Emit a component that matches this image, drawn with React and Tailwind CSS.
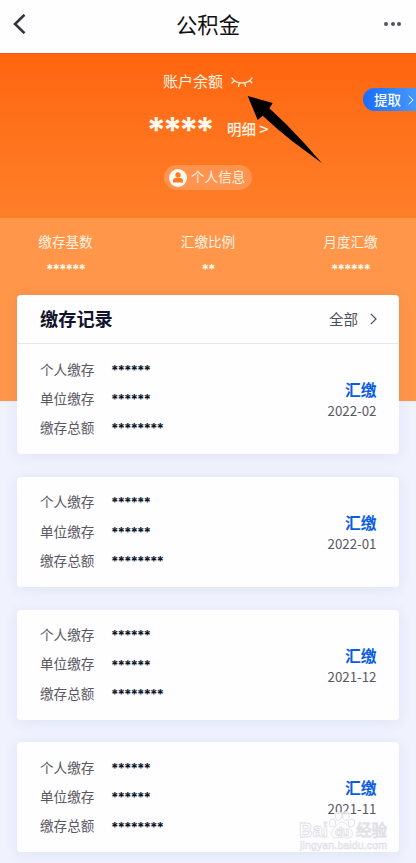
import React from 'react';

const stats = [
  { label: '缴存基数', value: '******' },
  { label: '汇缴比例', value: '**' },
  { label: '月度汇缴', value: '******' },
];

const records = [
  { date: '2022-02', personal: '******', company: '******', total: '********' },
  { date: '2022-01', personal: '******', company: '******', total: '********' },
  { date: '2021-12', personal: '******', company: '******', total: '********' },
  { date: '2021-11', personal: '******', company: '******', total: '********' },
];

const ClosedEye = () => (
  <svg width="22" height="12" viewBox="0 0 22 12" fill="none" stroke="#ffecd8" strokeWidth="1.4" strokeLinecap="round">
    <path d="M1 2C5 8.600 17 8.600 21 2" />
    <path d="M3.500 4.600L1 7M8.300 6.800L7.500 10.300M13.700 6.800l.8 3.500M18.500 4.600L21 7" />
  </svg>
);

const Chevron = ({ className }) => (
  <svg className={className} viewBox="0 0 7 12" fill="none" stroke="currentColor" strokeWidth="1.2">
    <path d="M0.8 0.8L6 6L0.8 11.2" />
  </svg>
);

const RecordRow = ({ label, value }) => (
  <div className="flex h-[29.3px] items-center">
    <span className="w-[71px] text-[13.6px] text-[#58585e]">{label}</span>
    <span className="h-[18px] font-['Inter'] text-[13.5px] font-bold leading-[20px] tracking-[-1.05px] text-[#0b1626]">{value}</span>
  </div>
);

const RecordBody = ({ record }) => (
  <div className="flex h-[110px] items-center justify-between pl-[23px] pr-[22.5px]">
    <div className="pb-[2px]">
      <RecordRow label="个人缴存" value={record.personal} />
      <RecordRow label="单位缴存" value={record.company} />
      <RecordRow label="缴存总额" value={record.total} />
    </div>
    <div className="flex flex-col items-end pt-[2px]">
      <span className="text-[15.8px] font-bold leading-[22px] text-[#0a5ce0]">汇缴</span>
      <span className="text-[13.3px] leading-[20px] text-[#58585e]">{record.date}</span>
    </div>
  </div>
);

const Watermark = () => (
  <svg
    className="absolute left-[296px] top-[806px]"
    width="96"
    height="48"
    viewBox="0 0 96 48"
    fill="#ffffff"
    fillOpacity="0.8"
    stroke="#dfdfe4"
    strokeWidth="0.9"
    fontFamily="'Liberation Sans', 'Noto Sans CJK SC', sans-serif"
  >
    <text x="3" y="31" fontSize="21" fontWeight="bold" textLength="29" lengthAdjust="spacingAndGlyphs">Bai</text>
    <ellipse cx="36.5" cy="17" rx="3.2" ry="4" />
    <ellipse cx="42.5" cy="10" rx="3.2" ry="4.3" />
    <ellipse cx="50" cy="10" rx="3.2" ry="4.3" />
    <ellipse cx="55.5" cy="17" rx="3.2" ry="4" />
    <path d="M46 16c-4 0-5.5 4-8 6.2-3.2 2.8-3.5 9.8 2 9.8 3 0 4-.7 6-.7s3 .7 6 .7c5.5 0 5.2-7 2-9.8C51.5 20 50 16 46 16z" />
    <text x="39" y="30" fontSize="12" fontWeight="bold" textLength="14">du</text>
    <text x="60" y="30" fontSize="15.5" textLength="31">经验</text>
    <text x="4" y="43" fontSize="10.5" strokeWidth="0.6" textLength="87">jingyan.baidu.com</text>
  </svg>
);

const App = () => {
  return (
    <div className="relative h-[863px] w-[416px] overflow-hidden bg-[#f0f3fe] font-['Noto_Sans_CJK_SC',sans-serif]">
      {/* Nav bar */}
      <header className="grid h-[53px] grid-cols-3 items-center bg-[#fefdff] pb-[6px]">
        <svg className="ml-[13px]" width="13" height="20" viewBox="0 0 13 20" fill="none" stroke="#343438" strokeWidth="2.6">
          <path d="M11.5 0.8L2 10L11.5 19.2" />
        </svg>
        <h1 className="text-center text-[21.3px] leading-[30px] text-[#111]">公积金</h1>
        <div className="mr-[15px] flex gap-[2.5px] justify-self-end">
          <i className="size-[4px] rounded-full bg-[#55555a]" />
          <i className="size-[4px] rounded-full bg-[#55555a]" />
          <i className="size-[4px] rounded-full bg-[#55555a]" />
        </div>
      </header>

      {/* Balance */}
      <section className="h-[165px] border-t border-[#e85f20] bg-linear-to-b from-[#ff650d] to-[#ff7f28] text-[#fff3e4]">
        <div className="flex h-[54px] items-center pl-[163px]">
          <span className="text-[15px]">账户余额</span>
          <span className="ml-[8px] mt-[1px]"><ClosedEye /></span>
        </div>
        <div className="mt-[2px] flex h-[38px] items-center pl-[146.5px]">
          <span className="h-[38px] w-[80.5px] font-['Inter'] text-[35px] font-bold leading-[41px] tracking-[-3.3px] text-[#fff8ee]">****</span>
          <span className="-mt-[2px] text-[14.5px] font-medium">明细 <span className="text-[16px]">&gt;</span></span>
        </div>
        <div className="ml-[164px] mt-[17px] flex h-[25px] w-[88px] items-center gap-[4px] rounded-full bg-white/20 pl-[5px]">
          <svg width="18" height="18" viewBox="0 0 18 18">
            <circle cx="9" cy="9" r="9" fill="#fffaf2" />
            <circle cx="9" cy="6" r="2.7" fill="#ff7a22" />
            <path d="M4 13.5V11.5C4 9.8 5.2 9 7 9h4c1.8 0 3 .8 3 2.5v2z" fill="#ff7a22" />
          </svg>
          <span className="-mt-[2px] whitespace-nowrap text-[13.6px]">个人信息</span>
        </div>
      </section>

      {/* Contribution stats */}
      <section className="flex h-[183px] justify-between bg-[#ff964a] px-[38px] pt-[13px] text-[#fff3e4]">
        {stats.map((item) => (
          <div key={item.label} className="flex w-[55px] flex-col items-center">
            <span className="whitespace-nowrap text-[13.6px] leading-[20px]">{item.label}</span>
            <span className="mt-[8px] font-['Inter'] text-[13.5px] font-bold leading-[21px] tracking-[-1.05px] text-[#fff8ee]">{item.value}</span>
          </div>
        ))}
      </section>

      {/* Records */}
      <main className="relative -mt-[106px] flex flex-col gap-[22.8px] px-[17px]">
        {records.map((record, i) => (
          <div key={record.date} className="rounded-[4px] bg-[#fefdff] shadow-[0_2px_14px_rgba(80,80,120,0.1)]">
            {i === 0 && (
              <div className="flex h-[49px] items-center justify-between border-b border-[#e6e6ed] pl-[23px] pr-[22.5px]">
                <h2 className="text-[18.2px] font-bold text-[#12142b]">缴存记录</h2>
                <div className="flex items-center gap-[11.5px] text-[#4d4d53]">
                  <span className="text-[14.5px]">全部</span>
                  <Chevron className="h-[12px] w-[7px]" />
                </div>
              </div>
            )}
            <RecordBody record={record} />
          </div>
        ))}
      </main>

      {/* Withdraw button, pinned to the right edge */}
      <button className="absolute right-0 top-[88px] flex h-[23px] w-[53px] items-center gap-[7px] rounded-l-full bg-linear-to-r from-[#1a6cff] to-[#4598f8] pl-[11px] text-white">
        <span className="-mt-[1px] whitespace-nowrap text-[13.5px] font-medium">提取</span>
        <Chevron className="h-[10px] w-[6px] shrink-0" />
      </button>

      {/* Pointer to the visibility toggle */}
      <svg className="absolute left-[247px] top-[95px]" width="76" height="70" viewBox="0 0 76 70">
        <path d="M0.7 1L25.7 8L22.3 13.3L40 30L58 49L75 68.3L45 46L31 34.5L15.7 20.7L10.7 25z" fill="#000" />
      </svg>

      <Watermark />
    </div>
  );
};

export default App;
